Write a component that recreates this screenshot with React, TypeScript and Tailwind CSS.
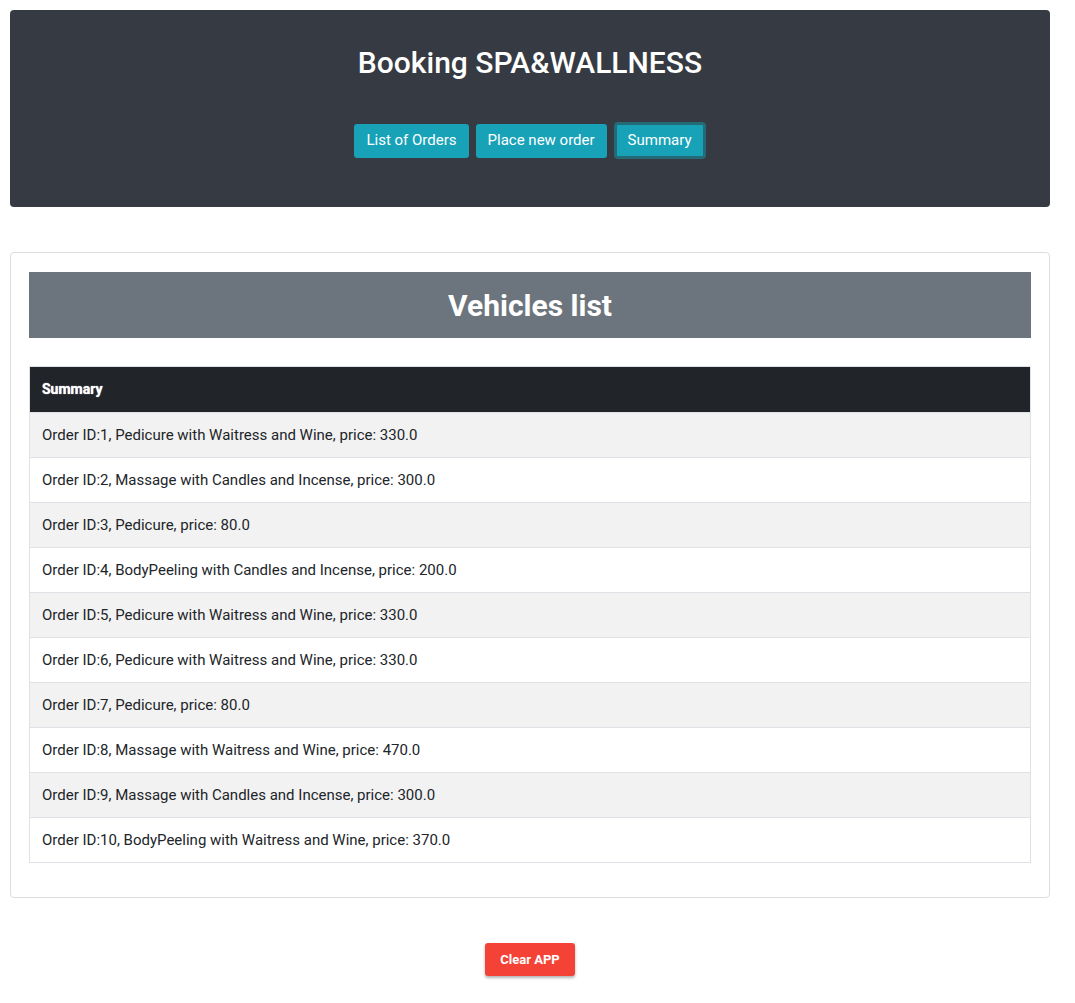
import React from 'react';

const orders = [
  'Order ID:1, Pedicure with Waitress and Wine, price: 330.0',
  'Order ID:2, Massage with Candles and Incense, price: 300.0',
  'Order ID:3, Pedicure, price: 80.0',
  'Order ID:4, BodyPeeling with Candles and Incense, price: 200.0',
  'Order ID:5, Pedicure with Waitress and Wine, price: 330.0',
  'Order ID:6, Pedicure with Waitress and Wine, price: 330.0',
  'Order ID:7, Pedicure, price: 80.0',
  'Order ID:8, Massage with Waitress and Wine, price: 470.0',
  'Order ID:9, Massage with Candles and Incense, price: 300.0',
  'Order ID:10, BodyPeeling with Waitress and Wine, price: 370.0',
];

const NavButton: React.FC<{ label: string; active?: boolean }> = ({ label, active }) => (
  <button
    className={
      active
        ? 'h-[37px] px-[11px] rounded-[4px] bg-[#17a2b8] text-white text-[15px] border-[3px] border-[#246b77]'
        : 'h-[34px] px-[12px] rounded-[3px] bg-[#17a2b8] text-white text-[15px]'
    }
  >
    {label}
  </button>
);

const App: React.FC = () => {
  return (
    <div className="bg-white min-h-screen pt-[10px] pl-[10px] pr-[25px] pb-[10px] text-[#212529]" style={{ fontFamily: 'Roboto, "Liberation Sans", sans-serif' }}>
      {/* Header */}
      <header className="bg-[#363a42] rounded-[4px] h-[197px] flex flex-col items-center pt-[35px]">
        <h1 className="text-white text-[30px] font-medium leading-[36px]">Booking SPA&amp;WALLNESS</h1>
        <div className="mt-[41px] flex items-center gap-[7px]">
          <NavButton label="List of Orders" />
          <NavButton label="Place new order" />
          <NavButton label="Summary" active />
        </div>
      </header>

      {/* Summary card */}
      <section className="mt-[45px] border border-[#dddddd] rounded-[4px] px-[18px] pt-[19px] pb-[34px]">
        <div className="bg-[#6c757d] h-[66px] flex items-center justify-center">
          <h2 className="text-white text-[30px] font-bold">Vehicles list</h2>
        </div>
        <table className="mt-[28px] w-full border-collapse border border-[#dee2e6]">
          <thead>
            <tr className="bg-[#212529] h-[46px]">
              <th className="text-left px-[12px] text-white text-[14px] font-bold [text-shadow:0_0_1px_#fff]">Summary</th>
            </tr>
          </thead>
          <tbody>
            {orders.map((o, i) => (
              <tr key={i} className={(i % 2 === 0 ? 'bg-[#f2f2f2]' : 'bg-white') + ' h-[45px] border-t border-[#dee2e6]'}>
                <td className="px-[12px] text-[15px]">{o}</td>
              </tr>
            ))}
          </tbody>
        </table>
      </section>

      <div className="mt-[45px] flex justify-center">
        <button className="h-[33px] px-[15px] rounded-[3px] bg-[#f44336] text-white text-[13px] font-bold shadow-[0_2px_3px_rgba(0,0,0,0.3)]">
          Clear APP
        </button>
      </div>
    </div>
  );
};

export default App;
